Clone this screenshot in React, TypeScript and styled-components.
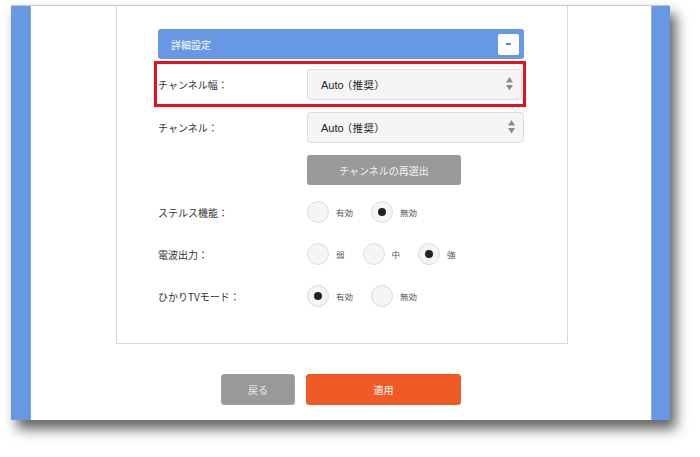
import React from "react";
import styled, { createGlobalStyle } from "styled-components";

const GlobalStyle = createGlobalStyle`
  html, body { margin: 0; padding: 0; background: #ffffff; }
  body { font-family: "Liberation Sans", "Noto Sans CJK JP", sans-serif; color: #333; }
  * { box-sizing: border-box; }
`;

const Stage = styled.div`
  width: 700px;
  height: 457px;
  padding: 5px 0 0 11px;
  background: #ffffff;
  overflow: hidden;
`;

const Window = styled.div`
  width: 659px;
  height: 415px;
  display: grid;
  grid-template-columns: 20px 1fr 19px;
  border-top: 1px solid #c4c8d0;
  box-shadow: 6px 9px 12px rgba(0, 0, 0, 0.62);
  overflow: hidden;
  background: #ffffff;
`;

const SideBar = styled.div<{ $side: "left" | "right" }>`
  background: #6798e4;
  ${(p) => (p.$side === "right" ? "border-left: 1px solid #8fb3ee;" : "border-right: 1px solid #7ea6ea;")}
`;

const Main = styled.div`
  display: flex;
  flex-direction: column;
  align-items: center;
  background: #ffffff;
`;

const Panel = styled.div`
  align-self: flex-start;
  margin-left: 85px;
  width: 452px;
  border: 1px solid #c9daf4;
  border-top: none;
  padding: 23px 43px 26px 41px;
  display: flex;
  flex-direction: column;
`;

const Header = styled.div`
  height: 30px;
  background: #6798e4;
  border-radius: 3px;
  display: flex;
  align-items: center;
  justify-content: space-between;
  padding: 0 5px 0 13px;
  color: #ffffff;
  font-family: "Noto Sans CJK JP", sans-serif;
  font-size: 10px;
`;

const ToggleButton = styled.div`
  width: 21px;
  height: 21px;
  background: #ffffff;
  border-radius: 2px;
  display: flex;
  align-items: center;
  justify-content: center;
  &::before {
    content: "";
    width: 5px;
    height: 1.5px;
    background: #4f86dc;
  }
`;

const Row = styled.div<{ $height: number; $top: number; $marked?: boolean }>`
  display: grid;
  grid-template-columns: 149px 1fr;
  align-items: center;
  height: ${(p) => p.$height}px;
  margin-top: ${(p) => p.$top}px;
  ${(p) =>
    p.$marked
      ? `outline: 3px solid #e5121c; outline-offset: 1px; margin-right: 2px;`
      : ""}
`;

const Label = styled.div`
  font-family: "Noto Sans CJK JP", sans-serif;
  font-size: 10px;
  color: #333;
  white-space: nowrap;
`;

const SelectBox = styled.div`
  height: 31px;
  background: #f5f5f5;
  border: 1px solid #dedede;
  border-radius: 3px;
  display: flex;
  align-items: center;
  justify-content: space-between;
  padding: 0 8px 0 13px;
  font-size: 11px;
  color: #222;
`;

const SelectValue = styled.span`
  display: flex;
  align-items: baseline;
  gap: 3px;
`;

const Note = styled.span`
  font-family: "Noto Sans CJK JP", sans-serif;
  font-size: 10.5px;
  font-feature-settings: "palt";
  letter-spacing: 0.6px;
`;

const Arrows = () => (
  <svg width="7" height="14" viewBox="0 0 7 14">
    <path d="M3.5 0 L7 5.5 L0 5.5 Z" fill="#8c8c8c" />
    <path d="M0 8 L7 8 L3.5 13.5 Z" fill="#8c8c8c" />
  </svg>
);

const GrayButton = styled.div<{ $width: number }>`
  width: ${(p) => p.$width}px;
  height: 30px;
  background: #999999;
  border-radius: 3px;
  display: flex;
  align-items: center;
  justify-content: center;
  font-family: "Noto Sans CJK JP", sans-serif;
  font-size: 10px;
  color: #f2f2f2;
`;

const Options = styled.div`
  display: flex;
  align-items: center;
  gap: 18px;
`;

const Option = styled.label`
  display: flex;
  align-items: center;
  gap: 7px;
  font-family: "Noto Sans CJK JP", sans-serif;
  font-size: 8.5px;
  color: #555;
`;

const Radio = styled.span<{ $checked?: boolean }>`
  width: 22px;
  height: 22px;
  border-radius: 50%;
  background: #f5f5f5;
  border: 1px solid #dcdcdc;
  display: flex;
  align-items: center;
  justify-content: center;
  &::after {
    content: "";
    width: 8px;
    height: 8px;
    border-radius: 50%;
    background: #222;
    display: ${(p) => (p.$checked ? "block" : "none")};
  }
`;

const Footer = styled.div`
  display: flex;
  justify-content: center;
  gap: 11px;
  margin-top: 30px;
`;

const ActionButton = styled.div<{ $primary?: boolean; $width: number }>`
  width: ${(p) => p.$width}px;
  height: 31px;
  border-radius: 3px;
  display: flex;
  align-items: center;
  justify-content: center;
  font-family: "Noto Sans CJK JP", sans-serif;
  font-size: 10px;
  background: ${(p) => (p.$primary ? "#f05a24" : "#999999")};
  border: 1px solid ${(p) => (p.$primary ? "#ee5a22" : "#a3a3a3")};
  color: ${(p) => (p.$primary ? "#ffffff" : "#e6e6e6")};
`;

const Spacer = styled.div`
  height: 6px;
`;

type Opt = { label: string; checked?: boolean };

const RadioRow = ({ label, options }: { label: string; options: Opt[] }) => (
  <Row $height={42} $top={0}>
    <Label>{label}</Label>
    <Options>
      {options.map((o) => (
        <Option key={o.label}>
          <Radio $checked={o.checked} />
          {o.label}
        </Option>
      ))}
    </Options>
  </Row>
);

const AutoValue = () => (
  <SelectValue>
    <span>Auto</span>
    <Note>（推奨）</Note>
  </SelectValue>
);

export default function App() {
  return (
    <>
      <GlobalStyle />
      <Stage>
        <Window>
          <SideBar $side="left" />
          <Main>
            <Panel>
              <Header>
                <span>詳細設定</span>
                <ToggleButton />
              </Header>
              <Row $height={38} $top={6} $marked>
                <Label>チャンネル幅：</Label>
                <SelectBox>
                  <AutoValue />
                  <Arrows />
                </SelectBox>
              </Row>
              <Row $height={38} $top={5}>
                <Label>チャンネル：</Label>
                <SelectBox>
                  <AutoValue />
                  <Arrows />
                </SelectBox>
              </Row>
              <Row $height={30} $top={9}>
                <span />
                <GrayButton $width={154}>チャンネルの再選出</GrayButton>
              </Row>
              <Spacer />
              <RadioRow
                label="ステルス機能："
                options={[{ label: "有効" }, { label: "無効", checked: true }]}
              />
              <RadioRow
                label="電波出力："
                options={[{ label: "弱" }, { label: "中" }, { label: "強", checked: true }]}
              />
              <RadioRow
                label="ひかりTVモード："
                options={[{ label: "有効", checked: true }, { label: "無効" }]}
              />
            </Panel>
            <Footer>
              <ActionButton $width={74}>戻る</ActionButton>
              <ActionButton $width={155} $primary>
                適用
              </ActionButton>
            </Footer>
          </Main>
          <SideBar $side="right" />
        </Window>
      </Stage>
    </>
  );
}
